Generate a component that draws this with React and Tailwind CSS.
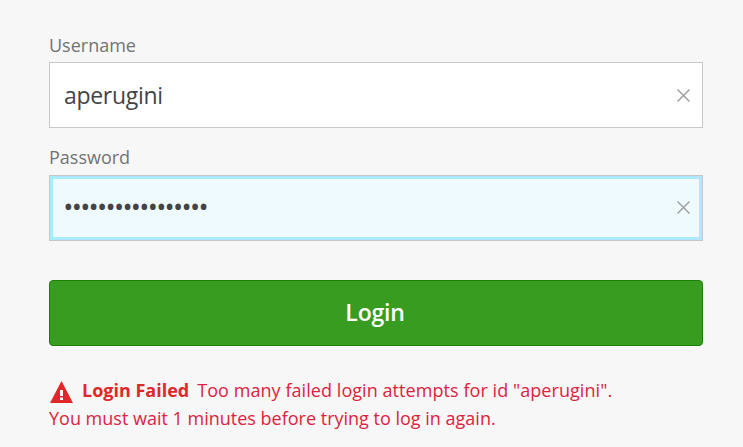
import { useState } from "react";

function Field({ id, label, type, value, onChange, active }) {
  return (
    <div className="flex flex-col">
      <label
        htmlFor={id}
        className={
          active
            ? "-mt-px mb-[6px] text-[18px] leading-6 text-[#737373]"
            : "mb-[5px] text-[18px] leading-6 text-[#737373]"
        }
      >
        {label}
      </label>
      <div
        className={
          active
            ? "flex h-[66px] items-center border border-[#c8c8c8] bg-[#effaff] pr-[12px] pb-[2px] pl-[14px] inset-ring-3 inset-ring-[#ace8fe]"
            : "flex h-[66px] items-center border border-[#c8c8c8] bg-white pr-[12px] pl-[14px]"
        }
      >
        <input
          id={id}
          type={type}
          value={value}
          onChange={(e) => onChange(e.target.value)}
          className={
            type === "password"
              ? "h-10 min-w-0 flex-1 bg-transparent pb-[3px] text-[23px] font-semibold tracking-[-0.2px] text-[#444] outline-none"
              : "h-10 min-w-0 flex-1 bg-transparent text-[23px] tracking-[-0.3px] text-[#444] outline-none"
          }
        />
        <button type="button" aria-label="Clear" onClick={() => onChange("")} className="text-[#a0a0a0]">
          <svg width="13" height="13" viewBox="0 0 13 13" fill="none" stroke="currentColor" strokeWidth="1.5">
            <path d="M0.5 0.5 12.5 12.5M12.5 0.5 0.5 12.5" />
          </svg>
        </button>
      </div>
    </div>
  );
}

export default function App() {
  const [username, setUsername] = useState("aperugini");
  const [password, setPassword] = useState("correcthorsebatte");

  return (
    <main className="h-[447px] w-[743px] overflow-hidden bg-[#f7f7f7] pt-[33px] pr-10 pl-[49px] font-['Open_Sans',sans-serif]">
      <form className="flex flex-col" onSubmit={(e) => e.preventDefault()}>
        <div className="flex flex-col gap-[18px]">
          <Field id="username" label="Username" type="text" value={username} onChange={setUsername} />
          <Field id="password" label="Password" type="password" value={password} onChange={setPassword} active />
        </div>
        <button
          type="submit"
          className="mt-[39px] h-[66px] rounded-[4px] border border-[#1b7f08] bg-[#389c20] pr-[2px] pb-[2px] text-[23px] font-semibold tracking-[-0.2px] text-white"
        >
          Login
        </button>
        <div className="mt-[30px] text-[18px] leading-7 text-[#e12828]">
          <div className="flex items-center whitespace-nowrap">
            <svg width="23" height="22" viewBox="0 0 23 22" className="mt-[3px] mr-[9px] ml-[1px]">
              <path d="M11.5 0 23 22H0Z" fill="#e12828" />
              <path d="M10 9h3v6h-3zM10 16.5h3v2.5h-3z" fill="#f7f7f7" />
            </svg>
            <strong className="mr-2 font-bold">Login Failed</strong>
            <span className="tracking-[0.06px] text-[#dc2440]">Too many failed login attempts for id "aperugini".</span>
          </div>
          <div className="whitespace-nowrap text-[#dc2440]">You must wait 1 minutes before trying to log in again.</div>
        </div>
      </form>
    </main>
  );
}
